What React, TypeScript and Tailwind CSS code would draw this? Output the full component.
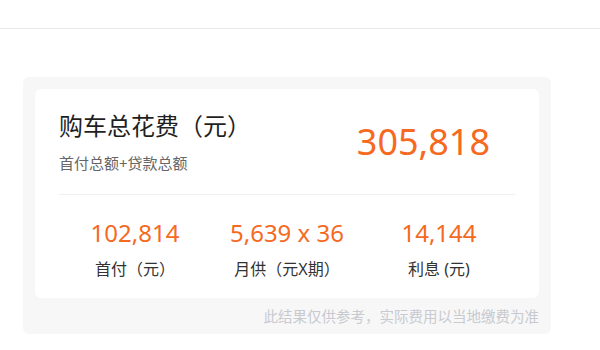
const font = { fontFamily: '"Noto Sans", "Noto Sans CJK SC", sans-serif' };

const items = [
  { value: "102,814", label: "首付（元）" },
  { value: "5,639 x 36", label: "月供（元X期）" },
  { value: "14,144", label: "利息 (元)" },
];

export default function App() {
  return (
    <div className="w-[600px] h-[350px] bg-white" style={font}>
      {/* top bar */}
      <div className="h-[29px] border-b border-[#e8e8e8]" />

      <div className="ml-[23px] mt-[48px] w-[528px] bg-[#f7f7f7] rounded-md px-3 pt-3">
        <div className="bg-white rounded-md px-6">
          {/* summary */}
          <div className="flex items-center justify-between pt-[21px] pb-[21px] border-b border-[#f0f0f0]">
            <div>
              <div className="text-[24px] leading-8 text-[#1f1f1f]">购车总花费（元）</div>
              <div className="mt-[11px] text-[15px] leading-5 text-[#666]">首付总额+贷款总额</div>
            </div>
            <div className="mr-[25px] text-[36px] leading-10 text-[#f56a1f]">305,818</div>
          </div>

          {/* breakdown */}
          <div className="grid grid-cols-3 pt-[22px] pb-[17px]">
            {items.map((it) => (
              <div key={it.label} className="flex flex-col items-center gap-2">
                <div className="text-[24px] leading-8 text-[#f56a1f]">{it.value}</div>
                <div className="text-[16px] leading-6 text-[#333]">{it.label}</div>
              </div>
            ))}
          </div>
        </div>

        <div className="py-2 text-right text-[14.5px] leading-5 text-[#c8cad0]">
          此结果仅供参考，实际费用以当地缴费为准
        </div>
      </div>
    </div>
  );
}
